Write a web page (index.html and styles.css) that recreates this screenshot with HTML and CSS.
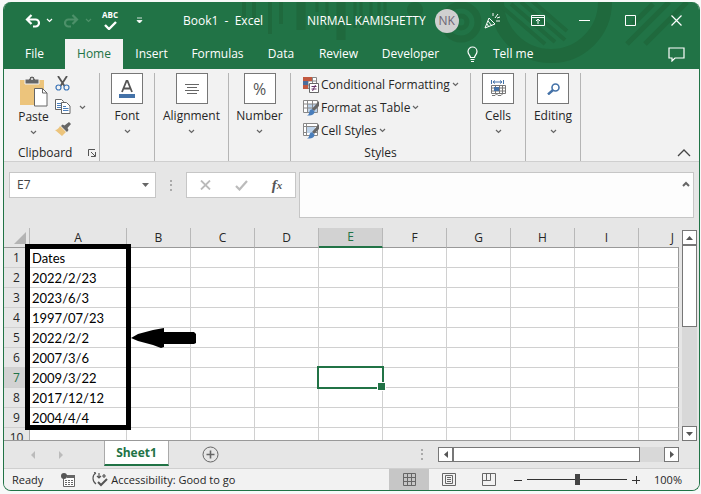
FILE: index.html
```html
<!DOCTYPE html>
<html lang="en">
<head>
<meta charset="utf-8">
<title>Book1 - Excel</title>
<link rel="stylesheet" href="styles.css">
</head>
<body>
<svg class="defs" width="0" height="0" aria-hidden="true">
  <symbol id="chev" viewBox="0 0 7 5"><path d="M1 1l2.500 2.500L6 1" fill="none" stroke="currentColor" stroke-width="1.200"/></symbol>
  <symbol id="brush" viewBox="0 0 16 16"><path d="M16 1v5l-5 5-2-2z" fill="#666"/><path d="M9.500 9.500l2 2c0 3-3 4.500-7.500 4 2-1 2-2 2.500-4 .5-1.500 2-2.500 3-2z" fill="#4a7ebb"/></symbol>
</svg>
<div class="window">
  <header class="top">
    <svg class="decor" width="460" height="67" viewBox="0 0 460 67" aria-hidden="true">
      <g fill="none" stroke="#1f693d">
        <circle cx="312" cy="0" r="54" stroke-width="14"/>
        <path d="M262 4l44 38M272 2l44 38M282 0l44 38M292-2l36 31" stroke-width="4"/>
        <circle cx="222" cy="20" r="17" stroke-width="7"/>
        <circle cx="222" cy="20" r="6" stroke-width="5"/>
        <path d="M414 2l-20 20M430 0l-36 36-6 6M448 0l-42 42" stroke-width="5"/>
        <path d="M5 0v15M15 0v18M31 0v32M42 0v22" stroke-width="4"/>
        <path d="M78 0v10M88 0v28M116 0v26M122 0v26M132 0v20M140 0v18M146 0v13" stroke-width="3"/>
        <path d="M62 0v28M102 0v38" stroke-width="9"/>
      </g>
      <circle cx="176" cy="8" r="8" fill="#1f693d"/>
    </svg>
    <div class="titlebar">
      <div class="quick">
        <button aria-label="Undo"><svg width="16" height="14" viewBox="0 0 16 14"><path d="M6.500 1L2 5.500 6.500 10M2 5.500h8.500a3.500 3.500 0 010 7H8" fill="none" stroke="currentColor" stroke-width="2.200"/></svg></button>
        <button aria-label="Undo list"><svg width="7" height="5"><use href="#chev"/></svg></button>
        <button class="dim" aria-label="Redo"><svg width="16" height="14" viewBox="0 0 16 14"><path d="M9.500 1L14 5.500 9.500 10M14 5.500H5.500a3.500 3.500 0 000 7H8" fill="none" stroke="currentColor" stroke-width="2.200"/></svg></button>
        <button class="dim" aria-label="Redo list"><svg width="7" height="5"><use href="#chev"/></svg></button>
        <button class="spell" aria-label="Spelling"><span>ABC</span><svg width="13" height="9" viewBox="0 0 13 9"><path d="M1 4l4 4 7-7" fill="none" stroke="currentColor" stroke-width="2.400"/></svg></button>
        <button aria-label="Customize toolbar"><svg width="7" height="7" viewBox="0 0 7 7"><path d="M1 1h5M1 3.500h5L3.500 6z" fill="currentColor" stroke="currentColor" stroke-width=".8"/></svg></button>
      </div>
      <h1>Book1&nbsp; -&nbsp; Excel</h1>
      <div class="account">NIRMAL KAMISHETTY <span class="avatar">NK</span></div>
      <div class="winbtns">
        <button aria-label="What's new"><svg width="18" height="18" viewBox="0 0 18 18" fill="none" stroke="currentColor"><path d="M6 6l6 6-10 4zM5 9l4 5M4 12l2 3M10 4V1M12 6l3-4M13 9h4M14 6l3-1"/></svg></button>
        <button aria-label="Ribbon display options"><svg width="14" height="11" viewBox="0 0 14 11" fill="none" stroke="currentColor"><path d="M.5.5h13v10H.5zM.5 2.500h13M7 9V4M5 6l2-2 2 2"/></svg></button>
        <button aria-label="Minimize"><svg width="11" height="11" viewBox="0 0 11 11"><path d="M0 5.500h11" stroke="currentColor"/></svg></button>
        <button aria-label="Maximize"><svg width="11" height="11" viewBox="0 0 11 11"><path d="M.5.500h10v10H.5z" fill="none" stroke="currentColor"/></svg></button>
        <button aria-label="Close"><svg width="11" height="11" viewBox="0 0 11 11"><path d="M.5.5l10 10M10.500.5l-10 10" stroke="currentColor" stroke-width="1.200"/></svg></button>
      </div>
    </div>
    <nav class="tabs">
      <a href="#file">File</a><a href="#home" class="active">Home</a><a href="#insert">Insert</a><a href="#formulas">Formulas</a><a href="#data">Data</a><a href="#review">Review</a><a href="#developer">Developer</a>
      <a href="#tell" class="tell"><svg width="11" height="17" viewBox="0 0 11 17" fill="none" stroke="currentColor" stroke-width="1.200"><path d="M3.500 11.500c0-2-2.500-3-2.500-6a4.500 4.500 0 019 0c0 3-2.500 4-2.500 6zM3.500 13.500h4M4 15.500h3"/></svg>Tell me</a>
      <button class="comment" aria-label="Comments"><svg width="17" height="15" viewBox="0 0 17 15"><path d="M1 1h15v10H7l-3 3v-3H1z" fill="none" stroke="currentColor" stroke-width="1.200"/></svg></button>
    </nav>
  </header>

  <section class="ribbon">
    <div class="group clipboard">
      <div class="clip-row">
        <button class="paste"><svg width="29" height="31" viewBox="0 0 29 31"><path d="M1 4h24v25H1z" fill="#ecc47c"/><path d="M6 8V3h4a3 3 0 016 0h4v5z" fill="#666" stroke="#f2f2f2"/><circle cx="13" cy="3" r="1" fill="#f2f2f2"/><path d="M15.500 12.500h8l4.500 4.500v13h-12.500z" fill="#fff" stroke="#666"/><path d="M23.500 12.500V17H28" fill="none" stroke="#666"/></svg>Paste<svg class="chev" width="7" height="5"><use href="#chev"/></svg></button>
        <div class="clip-tools">
          <button aria-label="Cut"><svg width="15" height="15" viewBox="0 0 15 15" fill="none"><path d="M3 0l6.500 10M12 0L5.500 10" stroke="#555" stroke-width="1.800"/><circle cx="3.500" cy="11.500" r="2.500" stroke="#3d76b8" stroke-width="1.200"/><circle cx="11.500" cy="11.500" r="2.500" stroke="#3d76b8" stroke-width="1.200"/></svg></button>
          <button aria-label="Copy"><svg width="16" height="15" viewBox="0 0 16 15" fill="#fff" stroke="#666"><path d="M.5.5h6l2 2v8h-8z"/><path d="M2 4.500h4M2 6.500h4M2 8.500h4" stroke="#4a7ebb"/><path d="M6.500 3.500h5l3.500 3.500v7.500H6.500z"/><path d="M8 7.500h3M8 9.500h5.500M8 11.500h5.500" stroke="#4a7ebb"/></svg><svg class="chev" width="7" height="5"><use href="#chev"/></svg></button>
          <button aria-label="Format painter"><svg width="17" height="14" viewBox="0 0 17 14"><path d="M5 4l6 6-4 4-7-6c2 0 4-2 5-4z" fill="#ecc47c"/><path d="M6 4l1.500-1.500 2 1L14 0l2 2-3.500 4 1 2L12 10z" fill="#666"/></svg></button>
        </div>
      </div>
      <div class="caption">Clipboard<button aria-label="Clipboard options"><svg width="8" height="8" viewBox="0 0 8 8" fill="none" stroke="#555"><path d="M.5 7V.5H7M3 3l4 4M7.500 3v4.500H3"/></svg></button></div>
    </div>
    <div class="group"><button class="big"><span class="tile"><svg width="16" height="18" viewBox="0 0 16 18"><path d="M3 12L7.500 1h1L13 12M4.500 8.500h7" fill="none" stroke="#555" stroke-width="1.800"/><path d="M0 14h16v4H0z" fill="#4472a8"/></svg></span>Font<svg class="chev" width="7" height="5"><use href="#chev"/></svg></button></div>
    <div class="group"><button class="big"><span class="tile"><svg width="14" height="12" viewBox="0 0 14 12"><path d="M0 1.500h14M2 4.500h10M0 7.500h14M2 10.500h10" stroke="#666"/></svg></span>Alignment<svg class="chev" width="7" height="5"><use href="#chev"/></svg></button></div>
    <div class="group"><button class="big"><span class="tile pct">%</span>Number<svg class="chev" width="7" height="5"><use href="#chev"/></svg></button></div>
    <div class="group styles">
      <button><svg width="16" height="16" viewBox="0 0 16 16"><path d="M.5.5h13v11H.5zM.5 4h13M.5 8h13M5 .5v11M9.500.5v11" fill="#fff" stroke="#888"/><path d="M0 0h9v4H0z" fill="#c2583f"/><path d="M0 8h5v4H0z" fill="#c2583f"/><path d="M0 4h5v4H0z" fill="#4a6c9b"/><path d="M6.500 6.500h9v9h-9z" fill="#fff" stroke="#666"/><path d="M8.500 9.500h5M8.500 12h5M12.500 8l-3 6" stroke="#636"/></svg>Conditional Formatting<svg class="chev" width="7" height="5"><use href="#chev"/></svg></button>
      <button><svg width="16" height="16" viewBox="0 0 16 16"><path d="M.5.5h13v12H.5z" fill="#fff"/><path d="M4 4h10v9H4z" fill="#bdd3ea"/><path d="M.5.5h14v12H.5zM.5 4h14M.5 8h14M4.500.5v12M9.500.5v12" fill="none" stroke="#888"/><use href="#brush" width="16" height="16"/></svg>Format as Table<svg class="chev" width="7" height="5"><use href="#chev"/></svg></button>
      <button><svg width="16" height="16" viewBox="0 0 16 16"><path d="M.5.5h14v12H.5zM.5 3.500h14M3.500.5v12M.5 9.500h14" fill="#fff" stroke="#888"/><path d="M4 4h8v6H4z" fill="#bdd3ea"/><use href="#brush" width="16" height="16"/></svg>Cell Styles<svg class="chev" width="7" height="5"><use href="#chev"/></svg></button>
      <div class="caption">Styles</div>
    </div>
    <div class="group"><button class="big"><span class="tile"><svg width="15" height="17" viewBox="0 0 15 17" fill="none"><path d="M.5 0v4M12.500 0v4M2 2h9M4 .5L2 2l2 1.500M9 .5L11 2 9 3.500" stroke="#4472a8"/><path d="M.5 5.500h14v8H.5zM.5 8h14M.5 11h14M4.500 5.500v8M8.500 5.500v8M11.500 5.500v8M1 15.500h3l1.500-1.500L7 15.500h3l1.500-1.500" stroke="#777"/><path d="M3 7h5v4H3z" fill="#4472a8"/></svg></span>Cells<svg class="chev" width="7" height="5"><use href="#chev"/></svg></button></div>
    <div class="group"><button class="big"><span class="tile"><svg width="13" height="12" viewBox="0 0 13 12" fill="none" stroke="#4472a8"><circle cx="8.500" cy="4.500" r="3.500" stroke-width="1.600"/><path d="M6 7l-5 4.500" stroke-width="2.400"/></svg></span>Editing<svg class="chev" width="7" height="5"><use href="#chev"/></svg></button></div>
    <button class="collapse" aria-label="Collapse ribbon"><svg width="14" height="8" viewBox="0 0 14 8"><path d="M1 7l6-6 6 6" fill="none" stroke="#444" stroke-width="1.300"/></svg></button>
  </section>

  <section class="formula">
    <div class="namebox"><input value="E7" aria-label="Name box"><button aria-label="Names"><svg width="7" height="4" viewBox="0 0 7 4"><path d="M0 0h7L3.500 4z" fill="#666"/></svg></button></div>
    <svg class="dots" width="2" height="11"><path d="M0 0h2v2H0zM0 4h2v2H0zM0 9h2v2H0z" fill="#aaa"/></svg>
    <div class="fx">
      <button aria-label="Cancel"><svg width="11" height="10" viewBox="0 0 11 10"><path d="M1 .5l9 9M10 .5l-9 9" stroke="#bbb" stroke-width="1.800"/></svg></button>
      <button aria-label="Enter"><svg width="13" height="11" viewBox="0 0 13 11"><path d="M1 6l3.500 3.500L12 1" fill="none" stroke="#bbb" stroke-width="2.200"/></svg></button>
      <button class="fn" aria-label="Insert function">f<sub>x</sub></button>
    </div>
    <div class="entry"><input aria-label="Formula"><button aria-label="Collapse formula bar"><svg width="8" height="6" viewBox="0 0 8 6"><path d="M1 5l3-3 3 3" fill="none" stroke="#666" stroke-width="2"/></svg></button></div>
  </section>

  <main class="sheet">
    <div class="cells">
      <table>
        <colgroup><col class="rowhead"><col class="wide"><col class="std"><col class="std"><col class="std"><col class="std"><col class="std"><col class="std"><col class="std"><col class="std"><col></colgroup>
        <thead><tr><th class="corner"><svg width="12" height="12" viewBox="0 0 12 12"><path d="M12 0v12H0z" fill="#b4b4b4"/></svg></th><th>A</th><th>B</th><th>C</th><th>D</th><th class="sel">E</th><th>F</th><th>G</th><th>H</th><th>I</th><th class="last">J</th></tr></thead>
        <tbody>
          <tr><th>1</th><td>Dates</td><td></td><td></td><td></td><td></td><td></td><td></td><td></td><td></td><td></td></tr>
          <tr><th>2</th><td>2022/2/23</td><td></td><td></td><td></td><td></td><td></td><td></td><td></td><td></td><td></td></tr>
          <tr><th>3</th><td>2023/6/3</td><td></td><td></td><td></td><td></td><td></td><td></td><td></td><td></td><td></td></tr>
          <tr><th>4</th><td>1997/07/23</td><td></td><td></td><td></td><td></td><td></td><td></td><td></td><td></td><td></td></tr>
          <tr><th>5</th><td>2022/2/2</td><td></td><td></td><td></td><td></td><td></td><td></td><td></td><td></td><td></td></tr>
          <tr><th>6</th><td>2007/3/6</td><td></td><td></td><td></td><td></td><td></td><td></td><td></td><td></td><td></td></tr>
          <tr><th class="sel">7</th><td>2009/3/22</td><td></td><td></td><td></td><td class="cursor"></td><td></td><td></td><td></td><td></td><td></td></tr>
          <tr><th>8</th><td>2017/12/12</td><td></td><td></td><td></td><td></td><td></td><td></td><td></td><td></td><td></td></tr>
          <tr><th>9</th><td>2004/4/4</td><td></td><td></td><td></td><td></td><td></td><td></td><td></td><td></td><td></td></tr>
          <tr><th>10</th><td></td><td></td><td></td><td></td><td></td><td></td><td></td><td></td><td></td><td></td></tr>
        </tbody>
      </table>
      <div class="mark"></div>
      <svg class="arrow" width="65" height="20" viewBox="0 0 65 20"><path d="M0 10L7 6l15-4 11-2v4h30l2 2v9l-2 1H33v3l-3 1-8-3-15-4z"/></svg>
    </div>
    <div class="vscroll">
      <button aria-label="Scroll up"><svg width="7" height="4" viewBox="0 0 7 4"><path d="M0 4h7L3.500 0z" fill="#555"/></svg></button>
      <div class="thumb"></div>
      <button aria-label="Scroll down"><svg width="7" height="4" viewBox="0 0 7 4"><path d="M0 0h7L3.500 4z" fill="#555"/></svg></button>
    </div>
  </main>

  <div class="sheetbar">
    <div class="navs">
      <button aria-label="Previous sheet"><svg width="4" height="8" viewBox="0 0 4 8"><path d="M4 0v8L0 4z" fill="#bbb"/></svg></button>
      <button aria-label="Next sheet"><svg width="4" height="8" viewBox="0 0 4 8"><path d="M0 0v8l4-4z" fill="#bbb"/></svg></button>
    </div>
    <a class="sheettab" href="#sheet1">Sheet1</a>
    <button class="add" aria-label="New sheet"><svg width="17" height="17" viewBox="0 0 17 17" fill="none" stroke="#666"><circle cx="8.500" cy="8.500" r="7.500"/><path d="M4.500 8.500h8M8.500 4.500v8" stroke-width="1.600"/></svg></button>
    <svg class="dots" width="2" height="11"><path d="M0 0h2v2H0zM0 4h2v2H0zM0 9h2v2H0z" fill="#aaa"/></svg>
    <div class="hscroll">
      <button aria-label="Scroll left"><svg width="4" height="7" viewBox="0 0 4 7"><path d="M4 0v7L0 3.500z" fill="#555"/></svg></button>
      <div class="thumb"></div>
      <button aria-label="Scroll right"><svg width="4" height="7" viewBox="0 0 4 7"><path d="M0 0v7l4-3.500z" fill="#555"/></svg></button>
    </div>
  </div>

  <footer class="status">
    <span>Ready</span>
    <svg class="macro" width="14" height="14" viewBox="0 0 14 14"><path d="M2.500 4v9.500h11V2.500H5" fill="#fff" stroke="#666"/><path d="M6 2h8v3H6z" fill="#666"/><path d="M4 7.500h8M4 9.500h8M4 11.500h8" stroke="#666" stroke-dasharray="2 1"/><circle cx="3" cy="3" r="3" fill="#555"/></svg>
    <button class="access"><svg width="16" height="15" viewBox="0 0 16 15" fill="none" stroke="#555" stroke-width="1.200"><path d="M4 1C0 3 0 9 4 12M4 1L2 .5M7 1v5M5 4l2 2 2-2M10 4h4M12 2v4"/><path d="M6 10l3 3 6-6" stroke-width="2"/></svg>Accessibility: Good to go</button>
    <div class="views">
      <button class="on" aria-label="Normal"><svg width="13" height="13" viewBox="0 0 13 13"><path d="M.5.5h12v12H.5zM.5 4.500h12M.5 8.500h12M4.500.5v12M8.500.5v12" fill="none" stroke="#666"/></svg></button>
      <button aria-label="Page layout"><svg width="14" height="13" viewBox="0 0 14 13"><path d="M.5.5h13v12H.5zM3.500 2.500h7v8h-7zM5 4.500h4M5 6.500h4M5 8.500h4" fill="none" stroke="#666"/></svg></button>
      <button aria-label="Page break preview"><svg width="14" height="13" viewBox="0 0 14 13"><path d="M.5.5h13v12H.5zM.5 7.500h8V.5M4.500.5v7" fill="none" stroke="#666"/></svg></button>
    </div>
    <button class="zoombtn" aria-label="Zoom out"><svg width="8" height="8" viewBox="0 0 8 8"><path d="M0 4.500h8" stroke="#333"/></svg></button>
    <input class="zoom" type="range" min="0" max="200" value="100" aria-label="Zoom">
    <button class="zoombtn" aria-label="Zoom in"><svg width="8" height="8" viewBox="0 0 8 8"><path d="M0 4.500h8M4.500 0v8" stroke="#333"/></svg></button>
    <button class="percent">100%</button>
  </footer>
</div>
</body>
</html>
```
FILE: styles.css
```css
* { box-sizing: border-box; }
body {
  margin: 0;
  padding: 2px 1px 3px 3px;
  height: 100vh;
  background: #f7f9f8;
  font: 12px/16px "Open Sans", "Noto Sans", sans-serif;
  color: #262626;
}
svg { display: block; flex: none; }
.defs { position: absolute; }
.chev { color: #666; }
button { border: 0; padding: 0; margin: 0; background: none; font: inherit; color: inherit; display: flex; align-items: center; justify-content: center; }
a { color: inherit; text-decoration: none; }
input { font: inherit; color: inherit; border: 0; padding: 0; background: none; min-width: 0; outline: 0; }
.window {
  height: 100%;
  display: flex;
  flex-direction: column;
  border: 1px solid #217346;
  border-top: 0;
  border-radius: 8px;
  overflow: hidden;
  background: #e6e6e6;
}

.top { position: relative; background: #217346; color: #fff; }
.decor { position: absolute; right: 0; top: 0; }
.titlebar { position: relative; display: flex; align-items: center; height: 37px; }
.quick { display: grid; grid-template-columns: 16px 16px 28px 6px 38px 20px; padding-left: 21px; width: 179px; }
.quick .dim { color: #4c9069; }
.quick .spell { flex-direction: column; font: bold 8px/8px "Open Sans", sans-serif; gap: 2px; }
h1 { margin: 0; font-size: 12px; font-weight: 400; width: 124px; white-space: nowrap; }
.account { display: flex; align-items: center; gap: 9px; white-space: nowrap; }
.avatar { width: 24px; height: 24px; border-radius: 50%; background: #d0d0d0; color: #6b6573; line-height: 24px; text-align: center; }
.winbtns { margin-left: auto; display: grid; grid-template-columns: repeat(5, 46px); }
.tabs { position: relative; display: grid; grid-template-columns: 61px 58px 57px 75px 52px 63px 81px 1fr 46px; height: 30px; line-height: 30px; text-align: center; }
.tabs .active { background: #f2f2f2; color: #217346; }
.tell { display: flex; align-items: center; gap: 15px; padding-left: 16px; }

.ribbon { display: grid; grid-template-columns: 96px 55px 74px 62px 180px 55px 55px 1fr; height: 93px; padding: 4px 0; background: #f2f2f2; border-bottom: 1px solid #cfcfcf; }
.group { border-right: 1px solid #b5b5b5; }
.big { width: 100%; flex-direction: column; }
.tile { display: flex; align-items: center; justify-content: center; width: 32px; height: 31px; margin-bottom: 4px; border: 1px solid #777; background: #fff; color: #555; }
.pct { font-size: 16px; }
.big > svg, .paste > svg:last-child { margin-top: 5px; }
.clipboard, .styles { display: flex; flex-direction: column; }
.clip-row { display: flex; gap: 7px; padding: 3px 0 0 15px; }
.paste { flex-direction: column; justify-content: flex-start; width: 29px; }
.paste > svg:first-child { margin-bottom: 2px; }
.clip-tools { display: grid; grid-auto-rows: 23px; justify-items: start; }
.clip-tools button { gap: 8px; align-items: flex-start; }
.clip-tools svg + svg { margin-top: 6px; }
.caption { margin-top: auto; display: flex; align-items: center; justify-content: space-between; padding: 0 3px 0 14px; }
.styles { padding-left: 12px; }
.styles button { justify-content: flex-start; gap: 2px; height: 23px; white-space: nowrap; }
.styles .caption { justify-content: center; padding: 0 12px 0 0; }
.collapse { justify-self: end; align-self: end; padding: 0 8px 4px 0; }

.formula { display: flex; align-items: flex-start; padding: 10px 5px; }
.namebox { display: flex; align-items: center; width: 147px; height: 26px; padding: 0 6px 0 7px; border: 1px solid #c6c6c6; background: #fff; }
.namebox input { flex: 1; color: #444; }
.formula .dots { margin: 8px 14px; }
.fx { display: grid; grid-template-columns: repeat(3, 36px); width: 110px; height: 26px; border: 1px solid #c6c6c6; background: #fff; }
.fn { font: italic bold 15px/20px "Liberation Serif", serif; color: #555; }
.fn sub { font-size: 11px; line-height: 10px; }
.entry { flex: 1; display: flex; align-items: flex-start; height: 46px; margin-left: 3px; border: 1px solid #c6c6c6; background: #fdfdfd; padding: 8px 3px; }
.entry input { flex: 1; }

.sheet { flex: 1; min-height: 0; display: flex; gap: 3px; padding-right: 2px; }
.cells { position: relative; flex: 1; overflow: hidden; border-bottom: 1px solid #999; }
table { width: 100%; table-layout: fixed; border-collapse: separate; border-spacing: 0; }
.rowhead { width: 26px; }
.wide { width: 97px; }
.std { width: 64px; }
th, td { height: 20px; padding: 0; font-weight: 400; line-height: 18px; border-right: 1px solid #d0d0d0; border-bottom: 1px solid #d0d0d0; }
td { background: #fff; color: #000; font-family: Lato, sans-serif; font-size: 13px; padding-left: 2px; white-space: nowrap; }
td:last-child { border-right-color: #999; }
thead th { border-color: #b8b8b8 #b8b8b8 #999; }
thead .corner svg { margin-left: 10px; }
thead .last { text-align: right; padding-right: 5px; border-right: 0; }
thead .sel { background: #d2d2d2; color: #217346; border-bottom: 2px solid #217346; }
tbody th { border-right-color: #aaa; }
tbody .sel { background: #d2d2d2; color: #217346; }
.cursor { position: relative; }
.cursor::before { content: ""; position: absolute; inset: -2px; border: 2px solid #217346; }
.cursor::after { content: ""; position: absolute; right: -4px; bottom: -4px; width: 7px; height: 7px; border: 1px solid #fff; background: #217346; }
.mark { position: absolute; left: 21px; top: 16px; width: 106px; height: 186px; border: 5px solid #000; }
.arrow { position: absolute; left: 127px; top: 100px; }

.vscroll { display: flex; flex-direction: column; width: 15px; margin-top: 2px; background: #d8d8d8; }
.vscroll button, .hscroll button { flex: none; width: 15px; height: 15px; border: 1px solid #777; background: #fff; }
.thumb { border: 1px solid #777; background: #fff; }
.vscroll .thumb { height: 82px; }
.vscroll button:last-child { margin-top: auto; }
.sheetbar { display: flex; height: 27px; padding-right: 20px; align-items: center; }
.navs { display: flex; gap: 24px; width: 100px; padding-left: 27px; }
.sheettab { align-self: flex-start; height: 25px; width: 65px; text-align: center; line-height: 24px; font-weight: 700; background: #fff; color: #217346; border: 1px solid #aaa; border-width: 0 1px 2px; border-bottom-color: #217346; }
.add { margin-left: 33px; }
.sheetbar .dots { margin-left: auto; }
.hscroll { display: flex; width: 241px; margin-left: 15px; background: #d8d8d8; }
.hscroll .thumb { width: 187px; }
.hscroll button:last-child { margin-left: auto; }

.status { display: flex; align-items: center; height: 22px; padding-left: 8px; background: #f2f2f2; border-top: 1px solid #cfcfcf; font-size: 11px; }
.macro { margin: 0 17px 0 18px; }
.access { gap: 3px; white-space: nowrap; }
.views { margin-left: auto; display: grid; grid-template-columns: repeat(3, 40px); height: 100%; }
.views .on { background: #c6c6c6; }
.zoombtn { margin: 0 5px; }
.zoom { appearance: none; width: 100px; height: 12px; margin: 0; background: linear-gradient(#333, #333) center / 100% 1px no-repeat; }
.zoom::-webkit-slider-thumb { appearance: none; width: 5px; height: 11px; background: #444; }
.percent { margin: 0 17px 0 9px; }
```
